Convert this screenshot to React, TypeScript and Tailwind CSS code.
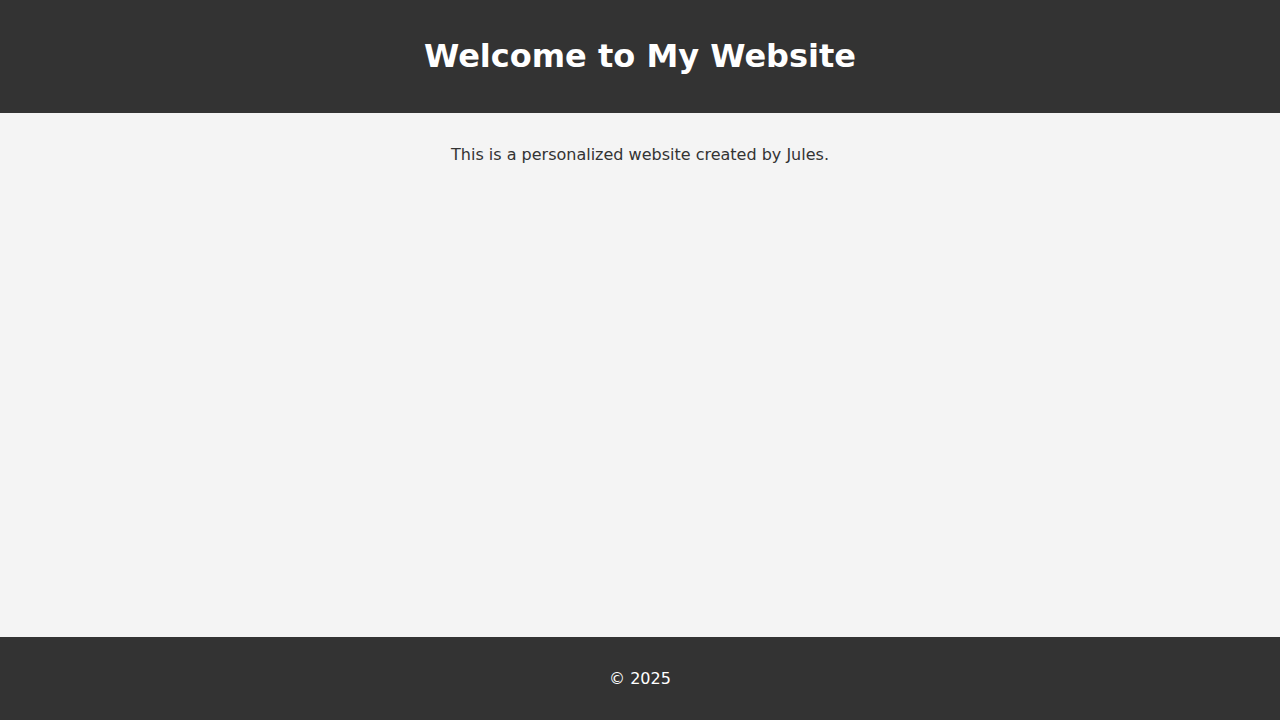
export default function App() {
  return (
    <div className="flex min-h-screen flex-col bg-[#f4f4f4] font-['DejaVu_Sans',sans-serif] text-[#333]">
      <header className="bg-[#333] py-4 text-center text-white">
        <h1 className="my-[21.44px] text-[32px] font-bold leading-[38px]">Welcome to My Website</h1>
      </header>
      <main className="flex-1 py-4 text-center">
        <p className="my-4 text-base leading-[19px]">This is a personalized website created by Jules.</p>
      </main>
      <footer className="bg-[#333] py-4 text-center text-white">
        <p className="my-4 text-base leading-[19px]">© 2025</p>
      </footer>
    </div>
  );
}
